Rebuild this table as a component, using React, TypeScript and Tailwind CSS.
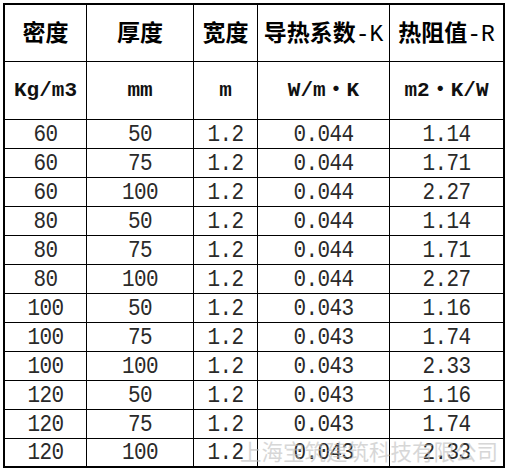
import React from "react";

const rows: string[][] = [
  ["60", "50", "1.2", "0.044", "1.14"],
  ["60", "75", "1.2", "0.044", "1.71"],
  ["60", "100", "1.2", "0.044", "2.27"],
  ["80", "50", "1.2", "0.044", "1.14"],
  ["80", "75", "1.2", "0.044", "1.71"],
  ["80", "100", "1.2", "0.044", "2.27"],
  ["100", "50", "1.2", "0.043", "1.16"],
  ["100", "75", "1.2", "0.043", "1.74"],
  ["100", "100", "1.2", "0.043", "2.33"],
  ["120", "50", "1.2", "0.043", "1.16"],
  ["120", "75", "1.2", "0.043", "1.74"],
  ["120", "100", "1.2", "0.043", "2.33"],
];

const head1: [string, string][] = [
  ["密度", ""],
  ["厚度", ""],
  ["宽度", ""],
  ["导热系数", "-K"],
  ["热阻值", "-R"],
];
const head2 = ["Kg/m3", "mm", "m", "W/m・K", "m2・K/W"];

const font = {
  fontFamily: '"Liberation Mono", "Noto Sans CJK SC", monospace',
};

function Cell({
  children,
  col,
  last,
  className,
}: {
  children: React.ReactNode;
  col: number;
  last: boolean;
  className: string;
}) {
  const right = col < 4 ? "border-r border-black" : "";
  const bottom = last ? "" : "border-b border-black";
  return (
    <div className={`flex items-center justify-center ${right} ${bottom} ${className}`}>
      {children}
    </div>
  );
}

export default function App() {
  return (
    <div className="relative w-[508px] h-[470px] bg-white overflow-hidden" style={font}>
      <div className="pl-[3px] pt-[3px]">
        <div className="w-[502px] h-[465px] border-2 border-black grid grid-cols-[82px_107px_64px_132px_113px] grid-rows-[57px_58px_repeat(11,29px)_27px]">
          {head1.map(([cjk, lat], i) => (
            <Cell key={"h1" + i} col={i} last={false} className="pt-[5px]">
              <span className="text-[23px] font-semibold text-black leading-none">
                {cjk}
                {lat && <span className="font-normal">{lat}</span>}
              </span>
            </Cell>
          ))}
          {head2.map((t, i) => (
            <Cell key={"h2" + i} col={i} last={false} className="">
              <span className="text-[21px] font-bold text-[#111] leading-none">{t}</span>
            </Cell>
          ))}
          {rows.map((r, ri) =>
            r.map((t, ci) => (
              <Cell key={ri + "-" + ci} col={ci} last={ri === rows.length - 1} className="">
                <span className="inline-block text-[21px] tracking-[-0.6px] text-[#2a2a2a] leading-none scale-y-110">
                  {t}
                </span>
              </Cell>
            ))
          )}
        </div>
      </div>
      <div
        className="absolute left-[240px] top-[440px] text-[21.5px] leading-none text-[#bdbdbd] opacity-60 whitespace-nowrap"
        style={{ fontFamily: '"Noto Sans CJK SC", sans-serif' }}
      >
        上海宝筑建筑科技有限公司
      </div>
    </div>
  );
}
